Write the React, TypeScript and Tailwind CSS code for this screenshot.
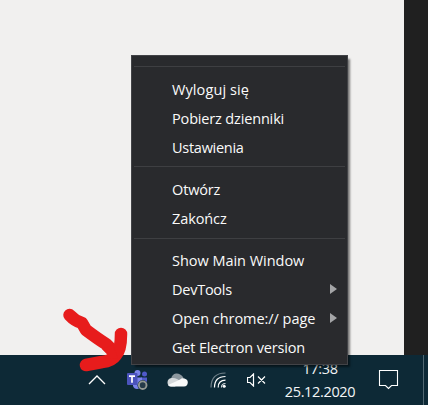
import React from "react";

type Item = { label: string; tracking: string; submenu?: boolean };

const groups: Item[][] = [
  [
    { label: "Wyloguj się", tracking: "tracking-[0.1px]" },
    { label: "Pobierz dzienniki", tracking: "tracking-[-0.16px]" },
    { label: "Ustawienia", tracking: "tracking-[-0.27px]" },
  ],
  [
    { label: "Otwórz", tracking: "tracking-[-0.15px]" },
    { label: "Zakończ", tracking: "tracking-[-0.1px]" },
  ],
  [
    { label: "Show Main Window", tracking: "tracking-[-0.03px]" },
    { label: "DevTools", tracking: "tracking-[-0.25px]", submenu: true },
    { label: "Open chrome:// page", tracking: "tracking-[-0.04px]", submenu: true },
    { label: "Get Electron version", tracking: "tracking-[-0.17px]" },
  ],
];

const groupSpacing = ["pt-2 pb-1", "pt-2 pb-[5px]", "pt-[7px]"];

function ContextMenu() {
  return (
    <div className="absolute left-[131px] top-[55px] h-[310px] w-[217px] border border-[#424347] bg-[#292a2d] px-[2px] pt-[10px] text-[14.5px] text-[#fafafa] shadow-[3px_3px_2px_-1px_rgba(0,0,0,0.5)]">
      {groups.map((items, g) => (
        <div key={g} className={"border-t border-[#3e3f42] " + groupSpacing[g]}>
          {items.map((item) => (
            <div key={item.label} className="flex h-[29px] items-center justify-between pl-[38px] pr-2">
              <span className={"whitespace-nowrap leading-[29px] " + item.tracking}>{item.label}</span>
              {item.submenu && (
                <svg className="mb-px h-[10px] w-[7px]" viewBox="0 0 7 10">
                  <path d="M0 0 7 5 0 10Z" fill="#a4a5a7" />
                </svg>
              )}
            </div>
          ))}
        </div>
      ))}
    </div>
  );
}

function TeamsIcon() {
  return (
    <svg className="ml-[21px] h-5 w-[21px] shrink-0" viewBox="0 0 21 20">
      <circle cx="10.5" cy="3" r="3" fill="#7b83eb" />
      <circle cx="17.5" cy="4" r="2.5" fill="#5059c9" />
      <path d="M14 7.5h6v7q-2 3-5 2Z" fill="#5059c9" />
      <path d="M6 7.5h9v7q-1 4.500-5 4.500-3 0-4-3Z" fill="#7b83eb" />
      <rect y="3" width="10.500" height="12" rx="1" fill="#4b53bc" />
      <path d="M2 6.200h6M5 6.200v6.500" stroke="#fff" strokeWidth="1.700" />
      <circle cx="15.700" cy="15.200" r="5.200" fill="#0d2a38" />
      <circle cx="15.700" cy="15.200" r="3.800" fill="#263b49" stroke="#949994" strokeWidth="1.900" />
    </svg>
  );
}

function Taskbar() {
  return (
    <div className="flex h-[50px] items-center bg-[#0d2936]">
      <svg className="ml-[88px] h-[10px] w-[18px] shrink-0" viewBox="0 0 18 10">
        <path d="m1 9 8-8 8 8" fill="none" stroke="#fff" strokeWidth="1.300" />
      </svg>
      <TeamsIcon />
      <svg className="ml-[19px] h-[14px] w-[21px] shrink-0" viewBox="0 0 21 14">
        <path d="M4 6Q5 1 9 .5q4-.5 7 3.500.5.500.5 1.500L11 9 3 8Z" fill="#8c979e" />
        <path d="M4.500 5q3-.5 5.500 1l4.500 2.500L8 13.500H4Q.5 13 .5 9.500 .5 5.500 4.500 5Z" fill="#d4d8da" />
        <path d="M13 6.500q2-2 4.500-1 3.500 1 3.300 4.300-.3 3.700-3.800 3.700H4q-2 0-3-1.500L10 8Z" fill="#f8f9f9" />
      </svg>
      <svg className="ml-[22px] h-4 w-4 shrink-0" viewBox="0 0 16 16" fill="none" strokeWidth="1.200">
        <path d="M1 15.500Q1 1 15.500 1" stroke="#71818a" />
        <path d="M4.500 15.500Q4.500 4.500 15.500 4.500M8.200 15.500Q8.200 8.200 15.500 8.200" stroke="#fff" />
        <path d="M11.500 15.500q0-4 4-4" stroke="#d5dbdf" />
        <circle cx="14.200" cy="14.200" r="1.500" fill="#fff" />
      </svg>
      <svg className="ml-[21px] h-[14px] w-5 shrink-0" viewBox="0 0 20 14" fill="none" stroke="#fff" strokeWidth="1.200">
        <path d="M.5 4.500h2.500L6.500 1v12L3 9.500H.5ZM11 3.500l7 7M18 3.500l-7 7" />
      </svg>
      <div className="ml-[17px] flex w-[72px] shrink-0 flex-col items-center text-[14.500px] leading-[23px] tracking-[-0.35px] text-[#f3f5f6]">
        <span>17:38</span>
        <span>25.12.2020</span>
      </div>
      <svg className="ml-[22px] h-5 w-[21px] shrink-0" viewBox="0 0 21 20">
        <path d="M1.500.500h18v15h-6l-3 3-3-3h-6Z" fill="none" stroke="#fff" strokeWidth="1.100" />
      </svg>
      <div className="ml-auto mr-1 h-full w-px bg-[#526872]" />
    </div>
  );
}

function RedArrow() {
  return (
    <svg className="absolute left-0 top-0 h-[405px] w-[428px]" viewBox="0 0 428 405" fill="none" stroke="#e71c1c" strokeWidth="12.500" strokeLinecap="round" strokeLinejoin="round">
      <path d="M69.500 315Q75 321 82 323L86 330Q98 339 106 344L114 352" />
      <path d="M121 334Q121 350 116 355 112 361 102 362L86 365" />
      <path d="M102 349 113 345 118 358 105 359 108 355Z" fill="#e71c1c" stroke="none" />
    </svg>
  );
}

export default function App() {
  return (
    <div className="relative flex h-[405px] w-[428px] flex-col overflow-hidden bg-[#f1f0ef] font-['Open_Sans','Noto_Sans',sans-serif]">
      <div className="flex flex-1 justify-end">
        <div className="w-6 bg-[#202020]" />
      </div>
      <Taskbar />
      <RedArrow />
      <ContextMenu />
    </div>
  );
}
